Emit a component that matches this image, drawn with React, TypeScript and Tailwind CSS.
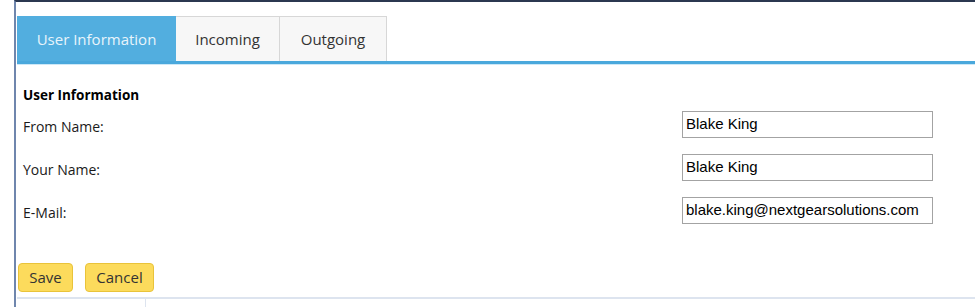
import React from "react";

const ui = { fontFamily: '"Open Sans", "Noto Sans", sans-serif' };
const arial = { fontFamily: '"Liberation Sans", Arial, sans-serif' };

function Field({ label, value }: { label: string; value: string }) {
  return (
    <div className="flex items-center h-[27px]">
      <div className="w-[665px] pl-[6px] text-[14px] text-[#1a1a1a] pt-[3px]" style={ui}>
        {label}
      </div>
      <div
        className="w-[251px] h-[27px] border border-[#a3a3a3] bg-white flex items-center px-[3px] text-[15px] text-black"
        style={arial}
      >
        {value}
      </div>
    </div>
  );
}

export default function App() {
  return (
    <div className="w-[975px] h-[307px] bg-white flex overflow-hidden">
      <div className="w-[14px] shrink-0 bg-white" />
      <div className="flex-1 border-l-2 border-t-2 border-l-[#6f86ad] border-t-[#2b3850] flex flex-col">
        <div className="pt-[14px] pl-[1px]">
          <div className="flex h-[45px]" style={ui}>
            <div className="w-[159px] bg-[#52aedf] text-[#e8f4fb] text-[15px] flex items-center justify-center pt-[1px]">
              User Information
            </div>
            <div className="w-[104px] bg-[#f7f7f7] border-t border-r border-[#d7d7d7] text-[#333] text-[15px] flex items-center justify-center pt-[1px]">
              Incoming
            </div>
            <div className="w-[107px] bg-[#f7f7f7] border-t border-r border-[#d7d7d7] text-[#333] text-[15px] flex items-center justify-center pt-[1px]">
              Outgoing
            </div>
          </div>
          <div className="h-[3px] bg-[#4aa8dc]" />
          <div className="h-[1px] bg-[#cde8f7]" />
        </div>
        <div className="pl-[1px] flex flex-col">
          <div className="pt-[20px] pl-[6px] text-[13.5px] font-bold text-black h-[46px]" style={ui}>
            User Information
          </div>
          <div className="flex flex-col gap-[16px]">
            <Field label="From Name:" value="Blake King" />
            <Field label="Your Name:" value="Blake King" />
            <Field label="E-Mail:" value="blake.king@nextgearsolutions.com" />
          </div>
          <div className="flex gap-[12px] mt-[39px] pl-[1px]" style={ui}>
            <button className="h-[29px] w-[55px] rounded-[4px] bg-[#fcdb5c] border border-[#e9c33a] text-[15px] text-[#333]">
              Save
            </button>
            <button className="h-[29px] w-[69px] rounded-[4px] bg-[#fcdb5c] border border-[#e9c33a] text-[15px] text-[#333]">
              Cancel
            </button>
          </div>
          <div className="mt-[5px] border-t-2 border-[#dde4ef] flex h-[20px]">
            <div className="w-[129px] border-r border-[#dde4ef]" />
          </div>
        </div>
      </div>
    </div>
  );
}
